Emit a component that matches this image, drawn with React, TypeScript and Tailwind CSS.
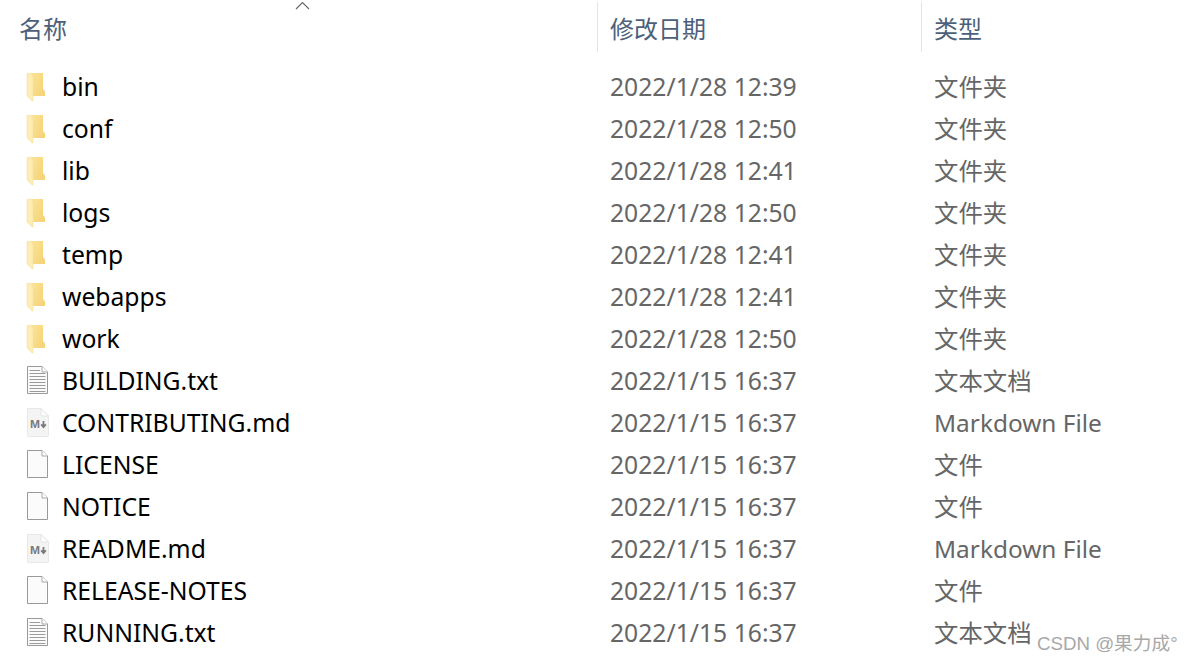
const FONT = "font-['Noto_Sans','Noto_Sans_CJK_SC',sans-serif]";

type Kind = 'folder' | 'text' | 'md' | 'file';
const rows: [Kind, string, string, string][] = [
  ['folder', 'bin', '2022/1/28 12:39', '文件夹'],
  ['folder', 'conf', '2022/1/28 12:50', '文件夹'],
  ['folder', 'lib', '2022/1/28 12:41', '文件夹'],
  ['folder', 'logs', '2022/1/28 12:50', '文件夹'],
  ['folder', 'temp', '2022/1/28 12:41', '文件夹'],
  ['folder', 'webapps', '2022/1/28 12:41', '文件夹'],
  ['folder', 'work', '2022/1/28 12:50', '文件夹'],
  ['text', 'BUILDING.txt', '2022/1/15 16:37', '文本文档'],
  ['md', 'CONTRIBUTING.md', '2022/1/15 16:37', 'Markdown File'],
  ['file', 'LICENSE', '2022/1/15 16:37', '文件'],
  ['file', 'NOTICE', '2022/1/15 16:37', '文件'],
  ['md', 'README.md', '2022/1/15 16:37', 'Markdown File'],
  ['file', 'RELEASE-NOTES', '2022/1/15 16:37', '文件'],
  ['text', 'RUNNING.txt', '2022/1/15 16:37', '文本文档'],
];

function Icon({ kind }: { kind: Kind }) {
  if (kind === 'folder') {
    return (
      <svg width="24" height="30" viewBox="0 0 24 30">
        <defs>
          <linearGradient id="fb" x1="0" y1="0" x2="1" y2="0.6">
            <stop offset="0" stopColor="#fce497" />
            <stop offset="1" stopColor="#f5d47a" />
          </linearGradient>
        </defs>
        <path d="M5 1 H17 V17 L19 19.5 V24 H7 Z" fill="url(#fb)" />
        <path d="M1 1.2 H4.5 L7 4 V29 L6 29 L1 24 Z" fill="#fdedb4" stroke="#f3dc98" strokeWidth="0.5" />
      </svg>
    );
  }
  if (kind === 'md') {
    return (
      <svg width="24" height="30" viewBox="0 0 24 30">
        <path d="M1.5 0.5 H15 L22.5 8 V27.5 Q22.5 28.5 21.5 28.5 H2.5 Q1.5 28.5 1.5 27.5 Z" fill="#f4f4f4" stroke="#e8e8e8" />
        <path d="M15 0.5 V6.5 Q15 8 16.5 8 H22.5 Z" fill="#ffffff" stroke="#e4e4e4" />
        <text x="4" y="20" fontSize="10" textLength="10" lengthAdjust="spacingAndGlyphs" fontWeight="700" fill="#7a7a7a" fontFamily="Liberation Sans">M</text>
        <path d="M17.5 13 V19 M15.2 16.3 L17.5 19 L19.8 16.3" fill="none" stroke="#7a7a7a" strokeWidth="1.8" />
      </svg>
    );
  }
  return (
    <svg width="24" height="30" viewBox="0 0 24 30">
      <path d="M1.5 0.5 H16 L21.5 6 V27.5 H1.5 Z" fill="#fbfbfb" stroke="#999999" />
      <path d="M16 0.5 V6 H21.5" fill="#ffffff" stroke="#a8a8a8" />
      {kind === 'text' &&
        [4, 7, 10, 13, 16, 19, 22, 25].map((y) => (
          <path key={y} d={`M3.5 ${y + 0.5} H${y < 7 ? 14 : 19.5}`} stroke="#9b9b9b" />
        ))}
    </svg>
  );
}

export default function App() {
  return (
    <div className={`relative h-[662px] w-[1191px] overflow-hidden bg-white ${FONT}`}>
      <header className="relative grid h-[66px] grid-cols-[597px_324px_1fr] items-start pt-[2px] text-[24px] leading-[54px] text-[#4c607a]">
        <div className="pl-[19px]">名称</div>
        <div className="h-[50px] border-l border-[#e5e5e5] pl-[12px]">修改日期</div>
        <div className="h-[50px] border-l border-[#e5e5e5] pl-[12px]">类型</div>
        <svg className="absolute left-[295px] top-[1px]" width="15" height="9" viewBox="0 0 15 9">
          <path d="M1 8 L7.5 1.5 L14 8" fill="none" stroke="#666" strokeWidth="1.1" />
        </svg>
      </header>
      <div>
        {rows.map(([kind, name, date, type]) => (
          <div key={name} className="grid h-[42px] grid-cols-[610px_324px_1fr] items-center text-[24.7px] leading-[40px]">
            <div className="flex items-center pl-[26px] text-black">
              <span className="flex w-[36px] shrink-0"><Icon kind={kind} /></span>
              <span>{name}</span>
            </div>
            <div className="text-[#666666]">{date}</div>
            <div className="text-[24.4px] text-[#666666]">{type}</div>
          </div>
        ))}
      </div>
      <div className="absolute left-[1037px] top-[631px] font-['Liberation_Sans','Noto_Sans_CJK_SC',sans-serif] text-[18.7px] leading-[26px] text-[#a8a8a8]">CSDN @果力成°</div>
    </div>
  );
}
